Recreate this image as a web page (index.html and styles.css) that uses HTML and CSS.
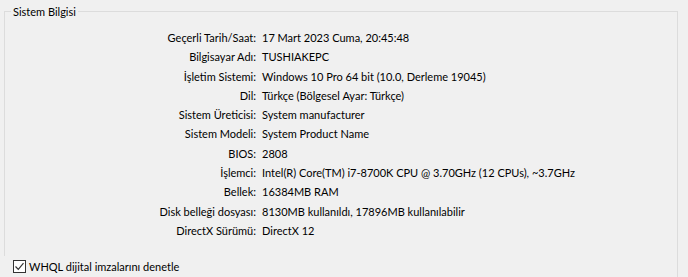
FILE: index.html
```html
<!DOCTYPE html>
<html lang="tr">
<head>
<meta charset="utf-8">
<link rel="stylesheet" href="styles.css">
</head>
<body>
<div class="page">
  <fieldset class="group">
    <legend class="group-title">Sistem Bilgisi</legend>
    <dl class="info">
      <dt>Geçerli Tarih/Saat:</dt><dd>17 Mart 2023 Cuma, 20:45:48</dd>
      <dt>Bilgisayar Adı:</dt><dd>TUSHIAKEPC</dd>
      <dt>İşletim Sistemi:</dt><dd>Windows 10 Pro 64 bit (10.0, Derleme 19045)</dd>
      <dt>Dil:</dt><dd>Türkçe (Bölgesel Ayar: Türkçe)</dd>
      <dt>Sistem Üreticisi:</dt><dd>System manufacturer</dd>
      <dt>Sistem Modeli:</dt><dd>System Product Name</dd>
      <dt>BIOS:</dt><dd>2808</dd>
      <dt>İşlemci:</dt><dd>Intel(R) Core(TM) i7-8700K CPU @ 3.70GHz (12 CPUs), ~3.7GHz</dd>
      <dt>Bellek:</dt><dd>16384MB RAM</dd>
      <dt>Disk belleği dosyası:</dt><dd>8130MB kullanıldı, 17896MB kullanılabilir</dd>
      <dt>DirectX Sürümü:</dt><dd>DirectX 12</dd>
    </dl>
  </fieldset>
  <label class="check-row">
    <span class="checkbox">
      <svg width="11" height="11" viewBox="0 0 11 11"><path d="M1.5 5.5 L4.3 8.3 L9.5 2.2" fill="none" stroke="#333" stroke-width="1.2"/></svg>
    </span>
    <span class="check-label">WHQL dijital imzalarını denetle</span>
  </label>
</div>
</body>
</html>
```

FILE: styles.css
```css
html, body {
  margin: 0;
  padding: 0;
  background: #f0f0f0;
}
body {
  font-family: Lato, "Noto Sans", sans-serif;
  font-size: 11px;
  color: #000;
  height: 277px;
  overflow: hidden;
}
.page {
  width: 674px;
  margin-left: 4px;
  padding-top: 5px;
}
.group {
  margin: 0;
  padding: 0 0 0 6px;
  border: 1px solid #dcdcdc;
  border-bottom: none;
  height: 251px;
  box-sizing: border-box;
  min-inline-size: 0;
}
.group-title {
  padding: 0 2px;
  line-height: 13px;
  color: #000;
}
.info {
  display: grid;
  grid-template-columns: 245px auto;
  column-gap: 6px;
  margin: 10px 0 0;
}
.info dt {
  text-align: right;
  line-height: 19.3px;
  white-space: nowrap;
}
.info dd {
  margin: 0;
  line-height: 19.3px;
  white-space: nowrap;
}
.check-row {
  display: flex;
  align-items: center;
  gap: 3px;
  height: 21px;
  padding-left: 9px;
  border-right: 1px solid #dcdcdc;
}
.checkbox {
  width: 11px;
  height: 11px;
  border: 1px solid #333;
  background: #fff;
  display: flex;
}
.check-label {
  line-height: 14px;
}
```
